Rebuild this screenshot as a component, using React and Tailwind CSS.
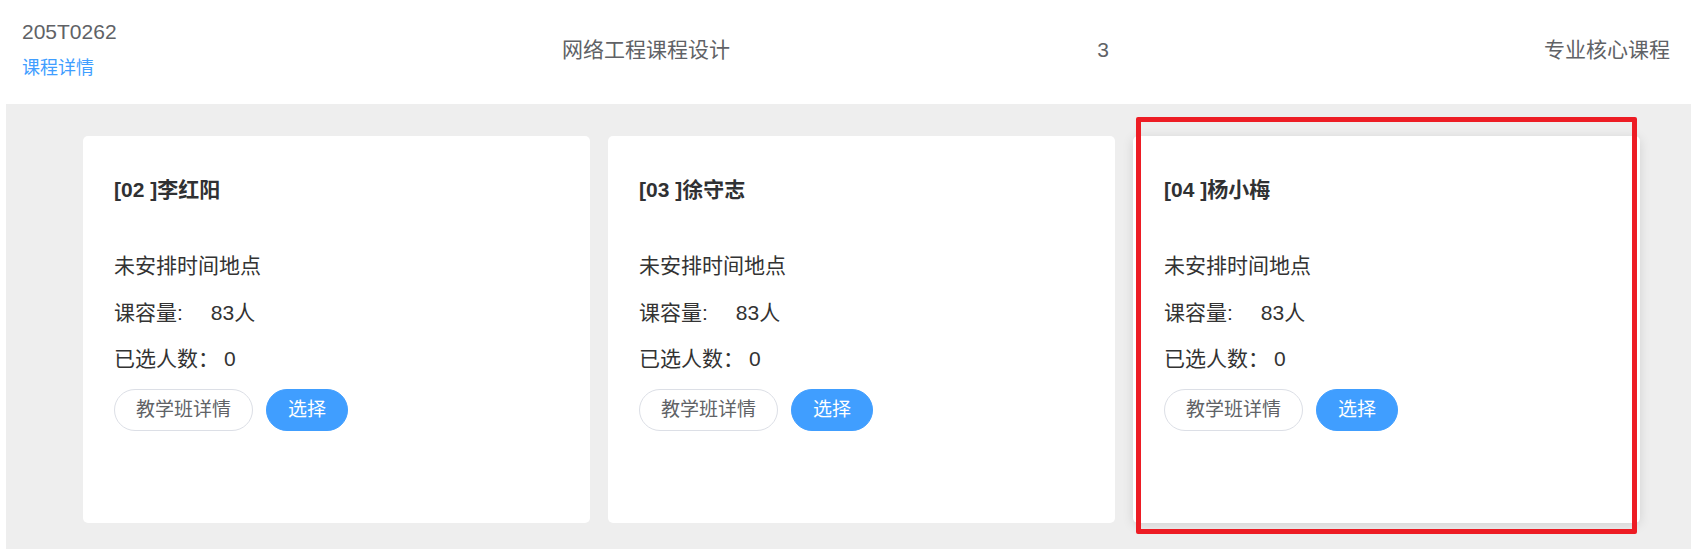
import React from "react";

const cards = [
  { code: "[02 ]", name: "李红阳", hover: false },
  { code: "[03 ]", name: "徐守志", hover: false },
  { code: "[04 ]", name: "杨小梅", hover: true },
];

function Card({ code, name, hover }) {
  return (
    <div
      className={
        "w-[507px] h-[387px] shrink-0 bg-white rounded-[5px] pl-[31px] pt-[42px] " +
        (hover ? "shadow-[0_2px_12px_0_rgba(0,0,0,0.12)]" : "")
      }
    >
      <div className="text-[21px] leading-[24px] font-bold text-[#303133]">
        {code}
        {name}
      </div>
      <div className="mt-[50px] text-[21px] leading-[28px] text-[#333333]">未安排时间地点</div>
      <div className="mt-[19px] text-[21px] leading-[28px] text-[#333333] flex">
        <span>课容量:</span>
        <span className="ml-[28px]">83人</span>
      </div>
      <div className="mt-[18px] text-[21px] leading-[28px] text-[#333333] flex">
        <span>已选人数：</span>
        <span className="ml-[5px]">0</span>
      </div>
      <div className="mt-[16px] flex gap-[13px]">
        <button className="h-[42px] px-[21px] rounded-full border border-[#dcdfe6] bg-white text-[19px] text-[#606266]">
          教学班详情
        </button>
        <button className="h-[42px] px-[21px] rounded-full border border-[#409eff] bg-[#409eff] text-[19px] text-white">
          选择
        </button>
      </div>
    </div>
  );
}

export default function App() {
  return (
    <div
      className="relative w-full h-[549px] bg-white overflow-hidden"
      style={{ fontFamily: '"Liberation Sans", "Noto Sans CJK SC", Arial, sans-serif' }}
    >
      <div className="h-[104px] flex items-center pl-[22px] pr-[21px] pt-5 pb-6 text-[#606266]">
        <div className="w-[400px] shrink-0 flex flex-col">
          <div className="text-[21px] leading-[24px]">205T0262</div>
          <div className="mt-3 text-[18px] leading-[24px] text-[#409eff]">课程详情</div>
        </div>
        <div className="w-[448px] shrink-0 text-center text-[21px] leading-[24px]">网络工程课程设计</div>
        <div className="w-[466px] shrink-0 text-center text-[21px] leading-[24px]">3</div>
        <div className="flex-1 text-right text-[21px] leading-[24px]">专业核心课程</div>
      </div>
      <div className="ml-[6px] h-[445px] bg-[#eeeeee] pt-[32px] pl-[77px] flex gap-[18px]">
        {cards.map((c) => (
          <Card key={c.code} {...c} />
        ))}
      </div>
      <div className="absolute left-[1136px] top-[117px] w-[501px] h-[417px] border-[5px] border-[#ed1c24] rounded-[2px] pointer-events-none" />
    </div>
  );
}
